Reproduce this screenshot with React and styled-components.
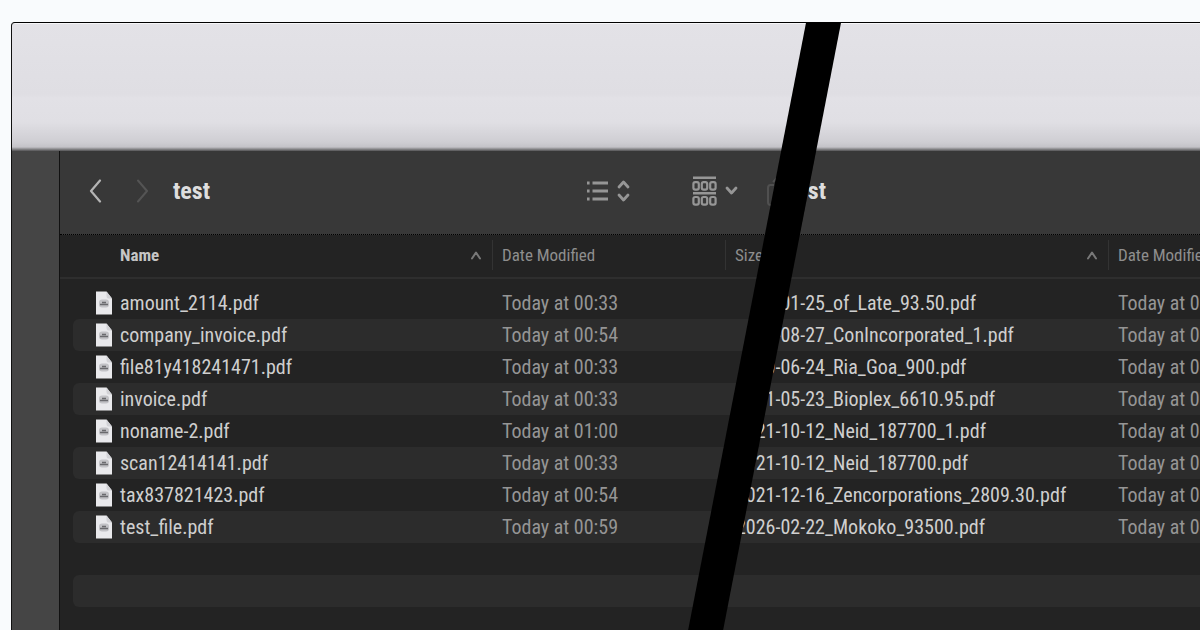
import React from 'react'
import styled, { createGlobalStyle, css } from 'styled-components'

const GlobalStyle = createGlobalStyle`
	* {
		box-sizing: border-box;
	}
	body {
		margin: 0;
		background-color: #f9fbfd;
		font-family: "Roboto Condensed", Roboto, "Liberation Sans", sans-serif;
	}
`

const Page = styled.div`
	display: flex;
	flex-direction: column;
	height: 100vh;
	padding: 22px 0 0 11px;
	overflow: hidden;
`

const Stage = styled.main`
	position: relative;
	flex: 1;
	display: grid;
	grid-template-columns: minmax(0, 1fr);
	border-top: 1px solid #000;
	border-left: 1px solid #111;
	border-top-left-radius: 4px;
	background-color: #232323;
	overflow: hidden;
`

const Layer = styled.section`
	grid-area: 1 / 1;
	display: flex;
	flex-direction: column;
	min-width: 0;
	overflow: hidden;
	${(props) => props.$after && css`
		padding-left: 616px;
		clip-path: polygon(calc(67% + 33px) 0, 100% 0, 100% 100%, calc(57% + 33px) 100%);
	`}
`

const Divider = styled.div`
	position: absolute;
	inset: 0;
	background-color: #000;
	clip-path: polygon(
		calc(67% - 2px) 0,
		calc(67% + 33px) 0,
		calc(57% + 34px) 100%,
		calc(57% - 1px) 100%
	);
`

const Backdrop = styled.div`
	flex: 0 0 128px;
	border-top: 1px solid #f6f6f8;
	background: linear-gradient(#e3e2e7 0, #dfdee3 70px, #e2e1e6 74px, #e0dfe4 98px, #cfced3 118px, #c4c3c8 123px, #383838 128px);
`

const Window = styled.div`
	flex: 1;
	display: flex;
	min-height: 0;
`

const Sidebar = styled.div`
	flex: 0 0 48px;
	background-color: #454545;
	border-right: 1px solid #111;
`

const Content = styled.div`
	flex: 1;
	min-width: 0;
	background-color: #232323;
`

const Toolbar = styled.div`
	display: flex;
	align-items: center;
	height: 84px;
	padding: 0 0 4px 23px;
	background-color: #383838;
	border-bottom: 1px dotted #000;
`

const Nav = styled.div`
	flex: 0 0 503px;
	display: flex;
	align-items: center;
`

const IconButton = styled.button`
	display: flex;
	align-items: center;
	flex: none;
	gap: 8px;
	margin: 0;
	padding: 0;
	margin-right: ${(props) => props.$gap || 0}px;
	border: none;
	background: none;
	color: ${(props) => props.$color || '#969696'};
`

const Title = styled.h1`
	margin: 0;
	color: #dedede;
	font-size: 24px;
	line-height: 32px;
	font-weight: 700;
`

const FileTable = styled.table`
	width: 100%;
	table-layout: fixed;
	border-collapse: separate;
	border-spacing: 0;
`

const HeadCell = styled.th`
	width: ${(props) => (props.$width ? `${props.$width}px` : 'auto')};
	height: 44px;
	padding: 0 0 2px;
	border-bottom: 2px solid #2e2e2e;
	color: ${(props) => (props.$active ? '#c6c6c6' : '#8e8e8e')};
	font-size: 17px;
	line-height: 30px;
	font-weight: ${(props) => (props.$active ? 700 : 400)};
	text-align: left;
	white-space: nowrap;
`

const HeadLabel = styled.div`
	display: flex;
	align-items: center;
	justify-content: space-between;
	padding: 0 10px 0 ${(props) => (props.$active ? 60 : 9)}px;
	border-left: ${(props) => (props.$active ? 'none' : '1px solid #333')};
`

const SortMark = styled.span`
	display: flex;
	color: #787878;
`

const Body = styled.tbody`
	&:before {
		content: "";
		display: block;
		height: 8px;
	}
`

const Cell = styled.td`
	height: 32px;
	padding: 0 0 0 10px;
	background-color: ${(props) => (props.$striped ? '#2c2c2c' : 'transparent')};
	color: #959595;
	font-size: 20px;
	line-height: 32px;
	white-space: nowrap;
`

const NameCell = styled(Cell)`
	padding: 0 0 0 13px;
	background-color: transparent;
	color: #cfcfcf;
`

const FileName = styled.div`
	display: flex;
	align-items: center;
	gap: 8px;
	height: 32px;
	padding-left: 23px;
	border-radius: 6px 0 0 6px;
	background-color: ${(props) => (props.$striped ? '#2c2c2c' : 'transparent')};
`

const beforeFiles = [
	['amount_2114.pdf', '00:33'],
	['company_invoice.pdf', '00:54'],
	['file81y418241471.pdf', '00:33'],
	['invoice.pdf', '00:33'],
	['noname-2.pdf', '01:00'],
	['scan12414141.pdf', '00:33'],
	['tax837821423.pdf', '00:54'],
	['test_file.pdf', '00:59'],
]

const afterFiles = [
	['2021-01-25_of_Late_93.50.pdf', '00:33'],
	['2021-08-27_ConIncorporated_1.pdf', '00:54'],
	['2020-06-24_Ria_Goa_900.pdf', '00:33'],
	['2021-05-23_Bioplex_6610.95.pdf', '00:33'],
	['2021-10-12_Neid_187700_1.pdf', '01:00'],
	['2021-10-12_Neid_187700.pdf', '00:33'],
	['2021-12-16_Zencorporations_2809.30.pdf', '00:54'],
	['2026-02-22_Mokoko_93500.pdf', '00:59'],
]

const Arrow = ({ d, width, height, strokeWidth = 2 }) => (
	<svg width={width} height={height} viewBox={`0 0 ${width} ${height}`} fill="none" stroke="currentColor" strokeWidth={strokeWidth} strokeLinecap="round" strokeLinejoin="round" aria-hidden="true">
		<path d={d} />
	</svg>
)

const ListIcon = () => (
	<svg width="23" height="22" viewBox="0 0 23 22" fill="none" stroke="currentColor" strokeWidth="2.8" aria-hidden="true">
		<path d="M1 3h2.6M1 11h2.6M1 19h2.6" />
		<path d="M6.5 3H22M6.5 11H22M6.5 19H22" />
	</svg>
)

const GroupIcon = () => (
	<svg width="25" height="30" viewBox="0 0 25 30" fill="none" stroke="currentColor" strokeWidth="2.2" aria-hidden="true">
		<path d="M1 1.8h23M1 17.2h23" strokeWidth="2.4" />
		{[1.4, 9.8, 18.2].map((x) => (
			<g key={x}>
				<rect x={x} y="6.2" width="5.4" height="7.4" rx="1.8" />
				<rect x={x} y="21" width="5.4" height="7.6" rx="1.8" />
			</g>
		))}
	</svg>
)

const ShareIcon = () => (
	<svg width="22" height="32" viewBox="0 0 22 32" fill="none" stroke="currentColor" strokeWidth="2" strokeLinejoin="round" aria-hidden="true">
		<path d="M7 10H3.5Q1 10 1 13v14q0 3 2.5 3h15q2.5 0 2.5-3V13q0-3-2.5-3H15" />
		<path d="M11 20V2M6 7l5-5 5 5" />
	</svg>
)

const FileIcon = () => (
	<svg width="16" height="24" viewBox="0 0 16 24" aria-hidden="true">
		<path d="M0 .5h10.5L16 7.5v16H0z" fill="#e9e9ec" />
		<path d="M10.5 .5 16 7.5h-3.5q-2 0-2-2.5z" fill="#d2d2d6" />
		<rect x="3" y="8.5" width="10" height="8" rx="3" fill="#c2c2c6" />
		<path d="M4 13.5h8M6 11.5h4" stroke="#6a6a6e" strokeWidth="1.6" />
	</svg>
)

const Finder = ({ files }) => (
	<Window>
		<Sidebar />
		<Content>
			<Toolbar>
				<Nav>
					<IconButton aria-label="Back" $gap={30} $color="#b4b4b4">
						<Arrow width={24} height={24} d="M17 1.5 8 12l9 10.5" strokeWidth={2.2} />
					</IconButton>
					<IconButton aria-label="Forward" $gap={24} $color="#545454">
						<Arrow width={12} height={24} d="M1 1.5 10 12 1 22.5" />
					</IconButton>
					<Title>test</Title>
				</Nav>
				<IconButton aria-label="View as list" $gap={62}>
					<ListIcon />
					<Arrow width={13} height={22} d="M2 7l4.5-5L11 7M2 15l4.5 5 4.5-5" strokeWidth={2.8} />
				</IconButton>
				<IconButton aria-label="Group items" $gap={29}>
					<GroupIcon />
					<Arrow width={13} height={10} d="M2 2l4.5 5L11 2" strokeWidth={2.8} />
				</IconButton>
				<IconButton aria-label="Share" $color="#505050">
					<ShareIcon />
				</IconButton>
			</Toolbar>
			<FileTable>
				<thead>
					<tr>
						<HeadCell $width={432} $active>
							<HeadLabel $active>
								Name
								<SortMark>
									<Arrow width={12} height={10} d="M2 8.5l4-6 4 6" />
								</SortMark>
							</HeadLabel>
						</HeadCell>
						<HeadCell $width={233}>
							<HeadLabel>Date Modified</HeadLabel>
						</HeadCell>
						<HeadCell>
							<HeadLabel>Size</HeadLabel>
						</HeadCell>
					</tr>
				</thead>
				<Body>
					{[...files, null, null].map((file, i) => {
						const striped = i % 2 === 1
						return (
							<tr key={i}>
								<NameCell>
									<FileName $striped={striped}>
										{file && <FileIcon />}
										{file && file[0]}
									</FileName>
								</NameCell>
								<Cell $striped={striped}>{file && `Today at ${file[1]}`}</Cell>
								<Cell $striped={striped} />
							</tr>
						)
					})}
				</Body>
			</FileTable>
		</Content>
	</Window>
)

const App = () => {
	return (
		<>
			<GlobalStyle />
			<Page>
				<Stage>
					<Layer aria-label="Before">
						<Backdrop />
						<Finder files={beforeFiles} />
					</Layer>
					<Layer aria-label="After" $after>
						<Backdrop />
						<Finder files={afterFiles} />
					</Layer>
					<Divider />
				</Stage>
			</Page>
		</>
	)
}

export default App
